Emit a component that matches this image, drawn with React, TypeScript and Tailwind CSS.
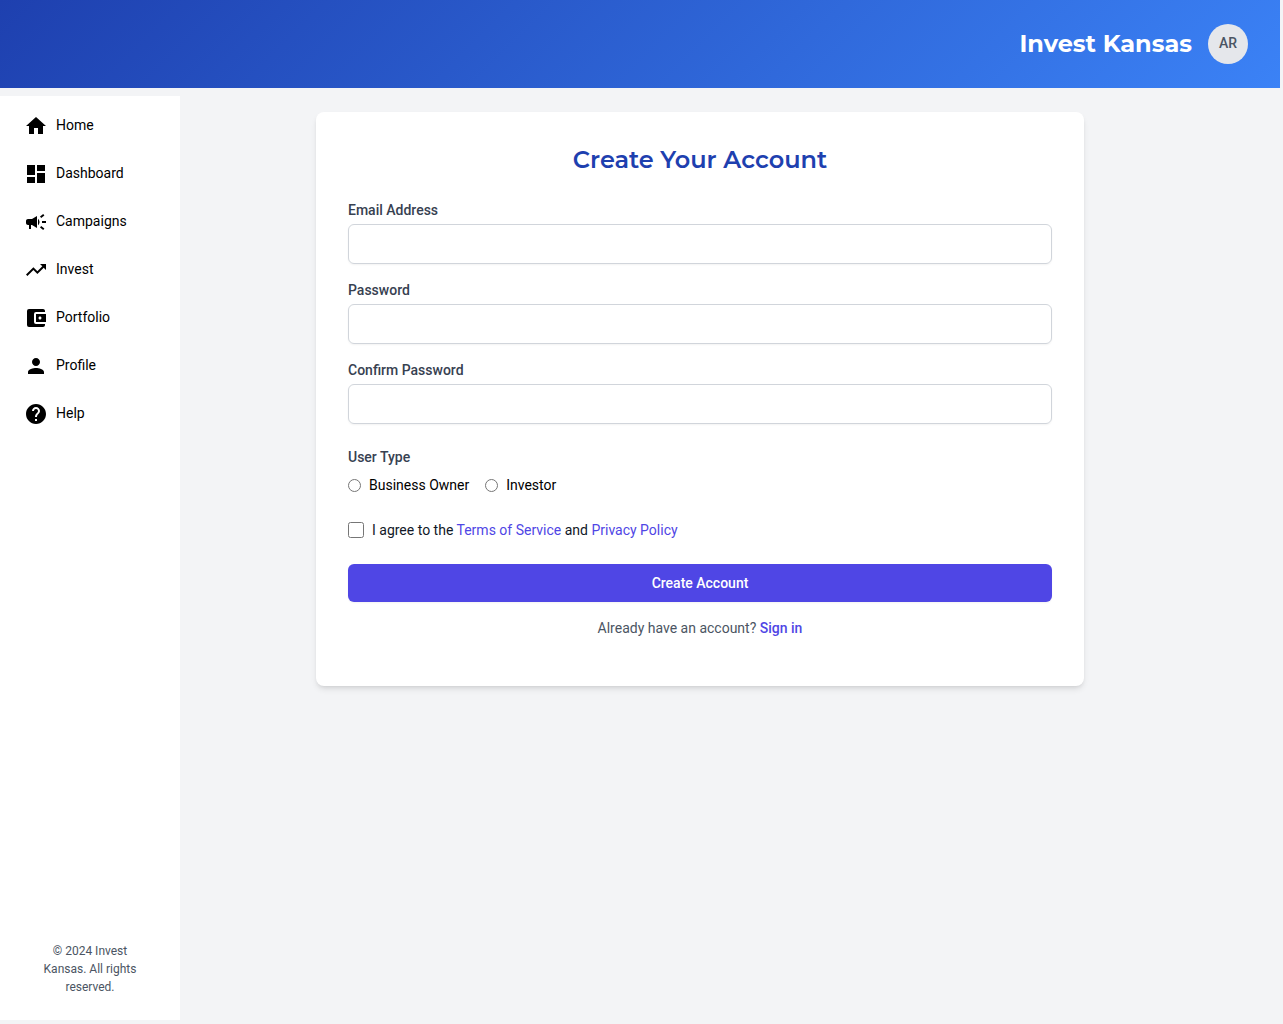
import { useState } from "react";
import type { FormEvent } from "react";
import type { IconType } from "react-icons";
import {
  MdAccountBalanceWallet,
  MdCampaign,
  MdDashboard,
  MdHelp,
  MdHome,
  MdPerson,
  MdTrendingUp,
} from "react-icons/md";

interface NavItem {
  label: string;
  icon: IconType;
}

const navItems: NavItem[] = [
  { label: "Home", icon: MdHome },
  { label: "Dashboard", icon: MdDashboard },
  { label: "Campaigns", icon: MdCampaign },
  { label: "Invest", icon: MdTrendingUp },
  { label: "Portfolio", icon: MdAccountBalanceWallet },
  { label: "Profile", icon: MdPerson },
  { label: "Help", icon: MdHelp },
];

const userTypes = ["Business Owner", "Investor"];

const Header = () => (
  <header className="flex h-22 items-center justify-end gap-4 bg-[linear-gradient(135deg,#1e40af,#3b82f6)] px-8">
    <span className="font-['Montserrat','Inter',sans-serif] text-2xl font-bold text-white">Invest Kansas</span>
    <button
      type="button"
      className="flex size-10 items-center justify-center rounded-full bg-[#e5e7eb] pb-0.5 text-sm font-medium text-[#4b5563]"
    >
      AR
    </button>
  </header>
);

const Sidebar = () => (
  <aside className="flex w-45 shrink-0 flex-col justify-between bg-white">
    <nav className="pt-1.5">
      {navItems.map(({ label, icon: Icon }) => (
        <a key={label} href="#" className="flex h-12 items-center gap-2 px-6 text-sm text-black">
          <Icon className="size-6" />
          <span className="pb-0.5">{label}</span>
        </a>
      ))}
    </nav>
    <p className="px-10 pb-6 text-center text-xs leading-[18px] text-[#4b5563]">
      © 2024 Invest Kansas. All rights reserved.
    </p>
  </aside>
);

interface FieldProps {
  id: string;
  label: string;
  type: string;
}

const Field = ({ id, label, type }: FieldProps) => (
  <div>
    <label htmlFor={id} className="block text-sm font-medium text-[#374151]">
      {label}
    </label>
    <input
      id={id}
      name={id}
      type={type}
      required
      className="mt-1 block h-10 w-full rounded-md border border-[#d1d5db] px-3 text-sm shadow-xs outline-none focus:border-[#6366f1]"
    />
  </div>
);

const SignUpForm = () => {
  const [userType, setUserType] = useState("");
  const [agreed, setAgreed] = useState(false);

  const handleSubmit = (e: FormEvent) => {
    e.preventDefault();
  };

  return (
    <div className="mx-auto w-full max-w-3xl rounded-lg bg-white p-8 shadow-md">
      <h1 className="text-center font-['Montserrat','Inter',sans-serif] text-2xl font-semibold text-[#1e40af]">
        Create Your Account
      </h1>
      <form onSubmit={handleSubmit} className="mt-6">
        <div className="flex flex-col gap-4">
          <Field id="email" label="Email Address" type="email" />
          <Field id="password" label="Password" type="password" />
          <Field id="confirmPassword" label="Confirm Password" type="password" />
        </div>

        <fieldset className="mt-[23px]">
          <legend className="text-sm font-medium text-[#374151]">User Type</legend>
          <div className="mt-2 flex gap-4">
            {userTypes.map((type) => (
              <label key={type} className="flex items-center gap-2 text-sm leading-[21px] text-black">
                <input
                  type="radio"
                  name="userType"
                  value={type}
                  checked={userType === type}
                  onChange={() => setUserType(type)}
                />
                {type}
              </label>
            ))}
          </div>
        </fieldset>

        <div className="mt-6 flex items-center gap-2 text-sm text-[#111827]">
          <input
            id="terms"
            type="checkbox"
            className="size-4"
            checked={agreed}
            onChange={(e) => setAgreed(e.target.checked)}
          />
          <label htmlFor="terms">
            I agree to the <a href="#" className="text-[#4f46e5]">Terms of Service</a> and{" "}
            <a href="#" className="text-[#4f46e5]">Privacy Policy</a>
          </label>
        </div>

        <button
          type="submit"
          className="mt-6 block w-full rounded-md bg-[#4f46e5] py-[9px] text-sm font-medium text-white shadow-xs hover:bg-[#4338ca]"
        >
          Create Account
        </button>
      </form>
      <p className="mt-4 mb-4 text-center text-sm text-[#4b5563]">
        Already have an account?{" "}
        <a href="#" className="font-medium text-[#4f46e5]">Sign in</a>
      </p>
    </div>
  );
};

const App = () => {
  return (
    <div className="min-h-screen bg-[#f3f4f6] font-['Roboto',sans-serif]">
      <div className="flex min-h-screen max-w-7xl flex-col pb-1">
        <Header />
        <div className="mt-2 flex flex-1">
          <Sidebar />
          <main className="flex-1 pt-4 pr-15 pb-4">
            <SignUpForm />
          </main>
        </div>
      </div>
    </div>
  );
};

export default App;
